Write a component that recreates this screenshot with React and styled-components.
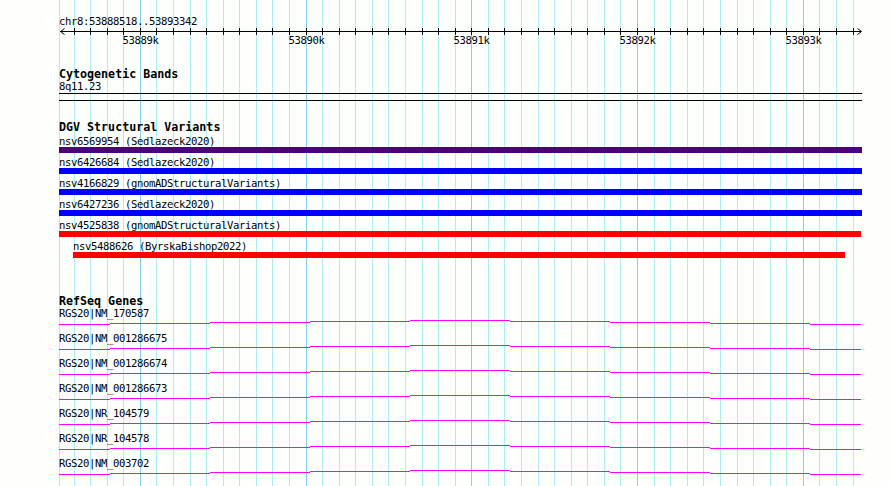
import React from 'react';
import styled, { createGlobalStyle } from 'styled-components';

const BG = '#fdfffd';
const LEFT = 59;
const WIDTH = 803;

const GlobalStyle = createGlobalStyle`
  html, body {
    margin: 0;
    padding: 0;
    background: ${BG};
  }
  body {
    font-family: "DejaVu Sans Mono", "Liberation Mono", monospace;
    color: #000;
  }
`;

const Page = styled.div`
  position: relative;
  width: 890px;
  height: 486px;
  overflow: hidden;
  background: ${BG};
`;

const GridLayer = styled.svg`
  position: absolute;
  left: 0;
  top: 0;
  z-index: 0;
`;

const Content = styled.div`
  position: relative;
  z-index: 1;
  display: flex;
  flex-direction: column;
  width: ${WIDTH}px;
  padding: 15px 0 0 ${LEFT}px;
`;

const SmallText = styled.div`
  font-family: "DejaVu Sans Mono", "Liberation Mono", monospace;
  font-size: 10.6px;
  letter-spacing: -0.38px;
  line-height: ${(p) => p.$lh || 12}px;
  white-space: pre;
  color: #000;
  padding-left: ${(p) => p.$indent || 0}px;
`;

const RulerSvg = styled.svg`
  display: block;
`;

const Track = styled.section`
  display: flex;
  flex-direction: column;
  margin-top: ${(p) => p.$gap}px;
`;

const TrackTitle = styled.div`
  font-family: "DejaVu Sans Mono", "Liberation Mono", monospace;
  font-weight: bold;
  font-size: 11.67px;
  line-height: 12px;
  white-space: pre;
  color: #000;
`;

const Band = styled.div`
  box-sizing: border-box;
  width: ${WIDTH}px;
  height: 8px;
  border-top: 1px solid #000;
  border-bottom: 1px solid #000;
`;

const Rows = styled.div`
  display: flex;
  flex-direction: column;
  margin-top: 2px;
`;

const VariantRow = styled.div`
  display: flex;
  flex-direction: column;
  margin-bottom: 3px;
  padding-left: ${(p) => p.$indent || 0}px;
`;

const VariantBar = styled.div`
  height: 6px;
  width: ${(p) => p.$w}px;
  background: ${(p) => p.$color};
`;

const GeneRow = styled.div`
  display: flex;
  flex-direction: column;
`;

const GeneSvg = styled.svg`
  display: block;
`;

const MONO = '"DejaVu Sans Mono", "Liberation Mono", monospace';

const gridCol = (n) => Math.round(139.8 + n * 16.575);
const gridNs = [];
for (let n = -4; n <= 43; n++) gridNs.push(n);

function Grid() {
  return (
    <GridLayer width="890" height="486" shapeRendering="crispEdges">
      <rect x={LEFT} y="0" width="1" height="486" fill="#afeeee" />
      {gridNs.map((n) => (
        <rect
          key={n}
          x={gridCol(n)}
          y="0"
          width="1"
          height="486"
          fill={n % 10 === 0 ? '#87ceeb' : '#afeeee'}
        />
      ))}
    </GridLayer>
  );
}

const majors = [
  { n: 0, label: '53889k' },
  { n: 10, label: '53890k' },
  { n: 20, label: '53891k' },
  { n: 30, label: '53892k' },
  { n: 40, label: '53893k' },
];

function Ruler() {
  return (
    <RulerSvg width={WIDTH + 1} height="18">
      <g shapeRendering="crispEdges">
        <rect x={60 - LEFT} y="3" width={861 - 60} height="1" fill="#000" />
        {gridNs.map((n) => (
          <rect key={n} x={gridCol(n) - LEFT} y="0" width="1" height="7" fill="#000" />
        ))}
      </g>
      <polyline
        points={`${64.5 - LEFT},0.5 ${60.5 - LEFT},3.5 ${64.5 - LEFT},6.5`}
        fill="none"
        stroke="#000"
        strokeWidth="1"
      />
      <polyline
        points={`${857.5 - LEFT},0.5 ${861.5 - LEFT},3.5 ${857.5 - LEFT},6.5`}
        fill="none"
        stroke="#000"
        strokeWidth="1"
      />
      {majors.map((m) => (
        <text
          key={m.n}
          x={gridCol(m.n) - LEFT + 0.5}
          y="15.5"
          textAnchor="middle"
          fontFamily={MONO}
          fontSize="10.6"
          letterSpacing="-0.38"
          fill="#000"
        >
          {m.label}
        </text>
      ))}
    </RulerSvg>
  );
}

const variants = [
  { label: 'nsv6569954 (Sedlazeck2020)', color: '#4b0082', w: 803 },
  { label: 'nsv6426684 (Sedlazeck2020)', color: '#0000ff', w: 803 },
  { label: 'nsv4166829 (gnomADStructuralVariants)', color: '#0000ff', w: 803 },
  { label: 'nsv6427236 (Sedlazeck2020)', color: '#0000ff', w: 803 },
  { label: 'nsv4525838 (gnomADStructuralVariants)', color: '#ff0000', w: 802 },
  { label: 'nsv5488626 (ByrskaBishop2022)', color: '#ff0000', w: 772, indent: 14 },
];

const genes = [
  'RGS20|NM_170587',
  'RGS20|NM_001286675',
  'RGS20|NM_001286674',
  'RGS20|NM_001286673',
  'RGS20|NR_104579',
  'RGS20|NR_104578',
  'RGS20|NM_003702',
];

const hatSegments = [
  [59, 110, 0],
  [110, 210, 1],
  [210, 310, 2],
  [310, 410, 3],
  [410, 510, 4],
  [510, 610, 3],
  [610, 710, 2],
  [710, 810, 1],
  [810, 861, 0],
];

function IntronHat() {
  return (
    <GeneSvg width={WIDTH} height="16" shapeRendering="crispEdges">
      {hatSegments.map(([x0, x1, lvl]) => (
        <rect key={x0} x={x0 - LEFT} y={6 - lvl} width={x1 - x0} height="1" fill="#ff00ff" />
      ))}
    </GeneSvg>
  );
}

export default function App() {
  return (
    <Page>
      <GlobalStyle />
      <Grid />
      <Content>
        <SmallText $lh={13}>chr8:53888518..53893342</SmallText>
        <Ruler />

        <Track $gap={22}>
          <TrackTitle>Cytogenetic Bands</TrackTitle>
          <SmallText $lh={13}>8q11.23</SmallText>
          <Band />
        </Track>

        <Track $gap={20}>
          <TrackTitle>DGV Structural Variants</TrackTitle>
          <Rows>
            {variants.map((v) => (
              <VariantRow key={v.label} $indent={v.indent}>
                <SmallText>{v.label}</SmallText>
                <VariantBar $w={v.w} $color={v.color} />
              </VariantRow>
            ))}
          </Rows>
        </Track>

        <Track $gap={34}>
          <TrackTitle>RefSeq Genes</TrackTitle>
          <Rows>
            {genes.map((g) => (
              <GeneRow key={g}>
                <SmallText $lh={9}>{g}</SmallText>
                <IntronHat />
              </GeneRow>
            ))}
          </Rows>
        </Track>
      </Content>
    </Page>
  );
}
